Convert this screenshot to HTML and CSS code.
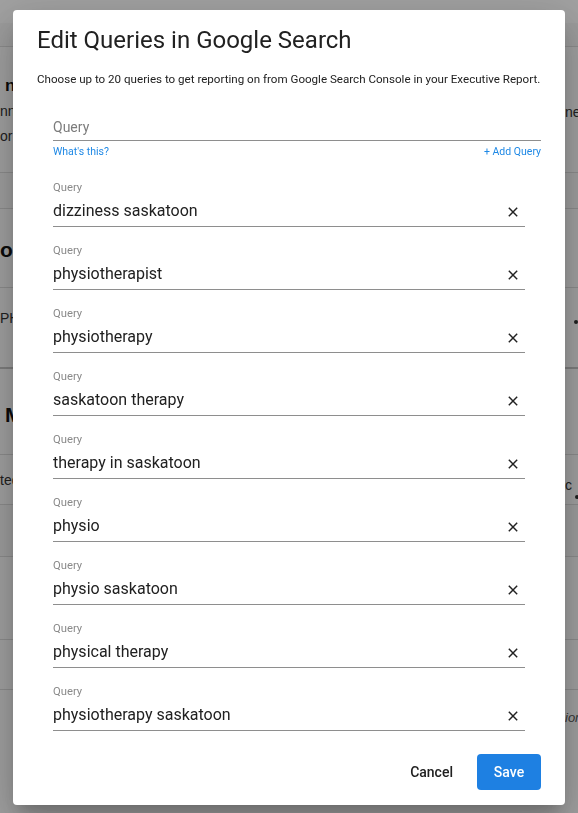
FILE: index.html
```html
<!DOCTYPE html>
<html lang="en">
<head>
<meta charset="utf-8">
<title>Edit Queries in Google Search</title>
<link rel="stylesheet" href="styles.css">
</head>
<body>
<div class="page">
  <div class="pg-row pg-top"></div>
  <div class="pg-row pg-a">
    <div class="pg-left">
      <span class="frag bold indent">n</span>
      <span class="frag">nn</span>
      <span class="frag">or</span>
    </div>
    <div class="pg-right"><span class="frag">ne</span></div>
  </div>
  <div class="pg-row pg-b"></div>
  <div class="pg-row pg-c"><div class="pg-left"><span class="frag bold big">o</span></div></div>
  <div class="pg-row pg-d"><div class="pg-left"><span class="frag">PH</span></div><div class="pg-right"><span class="dot"></span></div></div>
  <div class="pg-row pg-e"><div class="pg-left"><span class="frag bold big indent">M</span></div></div>
  <div class="pg-row pg-f"><div class="pg-left"><span class="frag">ted</span></div><div class="pg-right"><span class="frag">c</span><span class="dot"></span></div></div>
  <div class="pg-row pg-g"></div>
  <div class="pg-row pg-h"></div>
  <div class="pg-row pg-i"></div>
  <div class="pg-row pg-j"><div class="pg-left"></div><div class="pg-right"><span class="frag ital">ior</span></div></div>
</div>

<div class="overlay">
  <div class="dialog">
    <h1 class="title">Edit Queries in Google Search</h1>
    <p class="subtitle">Choose up to 20 queries to get reporting on from Google Search Console in your Executive Report.</p>

    <div class="new-query">
      <div class="input-line"><span class="placeholder">Query</span></div>
      <div class="helper">
        <span class="link">What's this?</span>
        <span class="link">+ Add Query</span>
      </div>
    </div>

    <div class="list">
      <div class="field">
        <div class="label">Query</div>
        <div class="value-line"><span class="value">dizziness saskatoon</span><svg class="close" viewBox="0 0 12 12" width="12" height="12"><path d="M1.8 1.8L10.2 10.2M10.2 1.8L1.8 10.2"/></svg></div>
      </div>
      <div class="field">
        <div class="label">Query</div>
        <div class="value-line"><span class="value">physiotherapist</span><svg class="close" viewBox="0 0 12 12" width="12" height="12"><path d="M1.8 1.8L10.2 10.2M10.2 1.8L1.8 10.2"/></svg></div>
      </div>
      <div class="field">
        <div class="label">Query</div>
        <div class="value-line"><span class="value">physiotherapy</span><svg class="close" viewBox="0 0 12 12" width="12" height="12"><path d="M1.8 1.8L10.2 10.2M10.2 1.8L1.8 10.2"/></svg></div>
      </div>
      <div class="field">
        <div class="label">Query</div>
        <div class="value-line"><span class="value">saskatoon therapy</span><svg class="close" viewBox="0 0 12 12" width="12" height="12"><path d="M1.8 1.8L10.2 10.2M10.2 1.8L1.8 10.2"/></svg></div>
      </div>
      <div class="field">
        <div class="label">Query</div>
        <div class="value-line"><span class="value">therapy in saskatoon</span><svg class="close" viewBox="0 0 12 12" width="12" height="12"><path d="M1.8 1.8L10.2 10.2M10.2 1.8L1.8 10.2"/></svg></div>
      </div>
      <div class="field">
        <div class="label">Query</div>
        <div class="value-line"><span class="value">physio</span><svg class="close" viewBox="0 0 12 12" width="12" height="12"><path d="M1.8 1.8L10.2 10.2M10.2 1.8L1.8 10.2"/></svg></div>
      </div>
      <div class="field">
        <div class="label">Query</div>
        <div class="value-line"><span class="value">physio saskatoon</span><svg class="close" viewBox="0 0 12 12" width="12" height="12"><path d="M1.8 1.8L10.2 10.2M10.2 1.8L1.8 10.2"/></svg></div>
      </div>
      <div class="field">
        <div class="label">Query</div>
        <div class="value-line"><span class="value">physical therapy</span><svg class="close" viewBox="0 0 12 12" width="12" height="12"><path d="M1.8 1.8L10.2 10.2M10.2 1.8L1.8 10.2"/></svg></div>
      </div>
      <div class="field">
        <div class="label">Query</div>
        <div class="value-line"><span class="value">physiotherapy saskatoon</span><svg class="close" viewBox="0 0 12 12" width="12" height="12"><path d="M1.8 1.8L10.2 10.2M10.2 1.8L1.8 10.2"/></svg></div>
      </div>
    </div>

    <div class="actions">
      <button class="btn btn-text">Cancel</button>
      <button class="btn btn-primary">Save</button>
    </div>
  </div>
</div>
</body>
</html>
```
FILE: styles.css
```css
* { box-sizing: border-box; }

html, body {
  margin: 0;
  padding: 0;
  height: 100%;
}

body {
  font-family: Roboto, "Liberation Sans", Arial, sans-serif;
  background: #fff;
  overflow: hidden;
}

/* ---------- underlying page ---------- */
.page {
  font-family: "Liberation Sans", Arial, sans-serif;
  color: #222;
}

.pg-row {
  display: flex;
  justify-content: space-between;
  border-bottom: 1px solid #dedede;
  background: #fff;
}

.pg-top { height: 47px; background: linear-gradient(#fff 0 23px, #f8f8f8 23px); }
.pg-a { height: 126px; }
.pg-b { height: 36px; background: #fbfbfb; }
.pg-c { height: 79px; }
.pg-d { height: 81px; border-bottom: 2px solid #c8c8c8; }
.pg-e { height: 86px; }
.pg-f { height: 50px; }
.pg-g { height: 52px; background: #fafafa; }
.pg-h { height: 83px; }
.pg-i { height: 50px; }
.pg-j { height: 140px; border-bottom: 0; }

.pg-left {
  width: 13px;
  display: flex;
  flex-direction: column;
  align-items: flex-start;
  white-space: nowrap;
}

.pg-right {
  width: 13px;
  white-space: nowrap;
  display: flex;
  align-items: center;
  gap: 4px;
}

.frag { font-size: 14px; line-height: 16px; color: #333; }
.bold { font-weight: 700; font-size: 17px; color: #111; }
.big { font-size: 21px; line-height: 24px; }
.ital { font-style: italic; color: #555; font-size: 13px; }
.indent { padding-left: 5px; }
.dot { width: 4px; height: 4px; border-radius: 50%; background: #333; flex-shrink: 0; }

.pg-a .pg-left { padding-top: 31px; gap: 9px; }
.pg-a .pg-right { align-items: flex-start; padding-top: 57px; }
.pg-c .pg-left { justify-content: center; padding-top: 4px; }
.pg-d .pg-left { justify-content: center; padding-bottom: 20px; }
.pg-d .pg-right { padding-left: 9px; padding-bottom: 12px; }
.pg-e .pg-left { justify-content: center; padding-top: 6px; }
.pg-f .pg-left { justify-content: center; }
.pg-f .pg-right {
  flex-direction: column;
  align-items: flex-start;
  justify-content: flex-start;
  gap: 2px;
  padding-top: 22px;
}
.pg-f .pg-right .dot { margin-left: 10px; }
.pg-j .pg-right { align-items: flex-start; padding-top: 20px; }

/* ---------- overlay & dialog ---------- */
.overlay {
  position: fixed;
  inset: 0;
  background: rgba(0, 0, 0, 0.37);
  display: flex;
  align-items: flex-start;
  justify-content: center;
  padding-top: 10px;
}

.dialog {
  width: 552px;
  background: #fff;
  border-radius: 4px;
  padding: 14px 0 15px;
  box-shadow: 0 11px 15px -7px rgba(0,0,0,.2), 0 24px 38px 3px rgba(0,0,0,.14), 0 9px 46px 8px rgba(0,0,0,.12);
  color: #212121;
}

.title {
  margin: 0;
  padding: 0 24px;
  font-size: 24px;
  line-height: 32px;
  font-weight: 400;
  color: #212121;
}

.subtitle {
  margin: 15px 0 0;
  padding: 0 24px;
  font-size: 11.6px;
  line-height: 16px;
  white-space: nowrap;
  color: #212121;
}

.new-query {
  margin-top: 30px;
  padding: 0 24px 0 40px;
}

.input-line {
  padding-bottom: 3px;
  border-bottom: 1px solid #8e8e8e;
  line-height: 20px;
}

.placeholder {
  font-size: 14px;
  color: #7c7c7c;
}

.helper {
  margin-top: 4px;
  display: flex;
  justify-content: space-between;
  line-height: 14px;
}

.link {
  font-size: 10.5px;
  color: #1e88e5;
}

.list {
  margin-top: 22px;
  padding: 0 40px;
}

.field + .field { margin-top: 17px; }

.label {
  font-size: 11.25px;
  line-height: 14px;
  color: #8a8a8a;
}

.value-line {
  margin-top: 6px;
  padding-bottom: 5px;
  border-bottom: 1px solid #8e8e8e;
  display: flex;
  align-items: center;
  justify-content: space-between;
  line-height: 20px;
}

.value {
  font-size: 16px;
  color: #212121;
}

.close {
  margin: 2px 6px 0 0;
  fill: none;
  stroke: #222;
  stroke-width: 1.45;
}

.actions {
  padding: 23px 24px 0;
  display: flex;
  justify-content: flex-end;
  align-items: center;
  gap: 12px;
}

.btn {
  font-family: Roboto, "Liberation Sans", Arial, sans-serif;
  font-size: 14px;
  font-weight: 500;
  height: 36px;
  border: 0;
  border-radius: 4px;
  cursor: pointer;
}

.btn-text {
  background: transparent;
  color: #212121;
  padding: 0 12px;
}

.btn-primary {
  background: #1e80e2;
  color: #fff;
  min-width: 64px;
  padding: 0 16px;
}
```
